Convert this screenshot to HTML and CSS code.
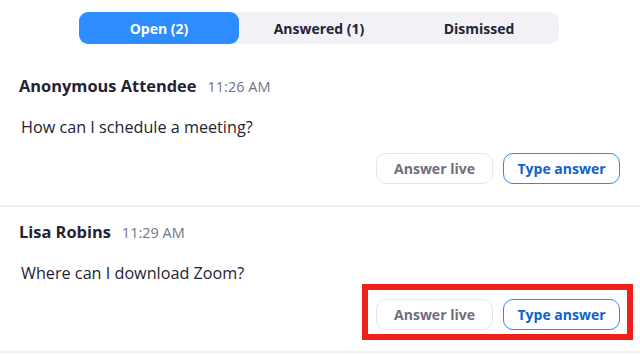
FILE: index.html
```html
<!DOCTYPE html>
<html lang="en">
<head>
  <meta charset="UTF-8" />
  <title>Q&amp;A</title>
  <link rel="stylesheet" href="styles.css">
</head>
<body>
  <!-- Tabs -->
  <nav class="tabs">
    <button class="tab active">Open (2)</button>
    <button class="tab">Answered (1)</button>
    <button class="tab">Dismissed</button>
  </nav>

  <!-- Question list -->
  <main class="questions">
    <section class="question first">
      <div class="question-head">
        <span class="asker">Anonymous Attendee</span>
        <span class="time">11:26 AM</span>
      </div>
      <p class="question-text">How can I schedule a meeting?</p>
      <div class="actions">
        <div class="btn-group">
          <button class="btn btn-live">Answer live</button>
          <button class="btn btn-type">Type answer</button>
        </div>
      </div>
    </section>

    <section class="question">
      <div class="question-head">
        <span class="asker">Lisa Robins</span>
        <span class="time">11:29 AM</span>
      </div>
      <p class="question-text">Where can I download Zoom?</p>
      <div class="actions">
        <div class="btn-group">
          <button class="btn btn-live">Answer live</button>
          <button class="btn btn-type">Type answer</button>
          <!-- annotation box -->
          <span class="highlight"></span>
        </div>
      </div>
    </section>
  </main>
</body>
</html>
```

FILE: styles.css
```css
* { box-sizing: border-box; margin: 0; padding: 0; }
body {
  font-family: 'Open Sans', 'Noto Sans', sans-serif;
  background: #fff;
  color: #232333;
  width: 640px;
  height: 355px;
  overflow: hidden;
}
/* Tabs */
.tabs {
  display: flex;
  width: 480px;
  margin: 12px 0 0 79px;
  background: #f1f1f6;
  border-radius: 9px;
}
.tab {
  flex: 1;
  height: 32px;
  border: none;
  background: transparent;
  font-family: inherit;
  font-size: 14px;
  font-weight: 700;
  color: #232333;
  border-radius: 9px;
}
.tab.active {
  background: #2d8cff;
  color: #fff;
}
/* Questions */
.questions { margin-top: 17px; }
.question {
  padding: 14px 20px 21px 19px;
  border-bottom: 2px solid #efeff4;
}
.question-head {
  display: flex;
  align-items: baseline;
  gap: 11px;
  height: 22px;
  line-height: 22px;
}
.asker {
  font-size: 16.4px;
  font-weight: 700;
  color: #232333;
}
.time {
  font-size: 14.5px;
  color: #747487;
}
.question-text {
  margin-top: 19px;
  padding-left: 2px;
  font-size: 16.2px;
  line-height: 22px;
  color: #232333;
}
.actions {
  display: flex;
  justify-content: flex-end;
  margin-top: 15px;
}
.btn-group {
  position: relative;
  display: flex;
  gap: 10px;
}
.btn {
  width: 117px;
  height: 31px;
  border-radius: 10px;
  background: #fff;
  font-family: inherit;
  font-size: 14px;
  font-weight: 700;
}
.btn-live {
  border: 1px solid #e6e6ee;
  color: #6e6e7e;
}
.btn-type {
  border: 1.5px solid #3a86e6;
  color: #0e62cc;
}
/* red annotation around second question's buttons */
.highlight {
  position: absolute;
  top: -15px;
  bottom: -10px;
  left: -14px;
  right: -13px;
  border: 6px solid #f0211c;
}
```
